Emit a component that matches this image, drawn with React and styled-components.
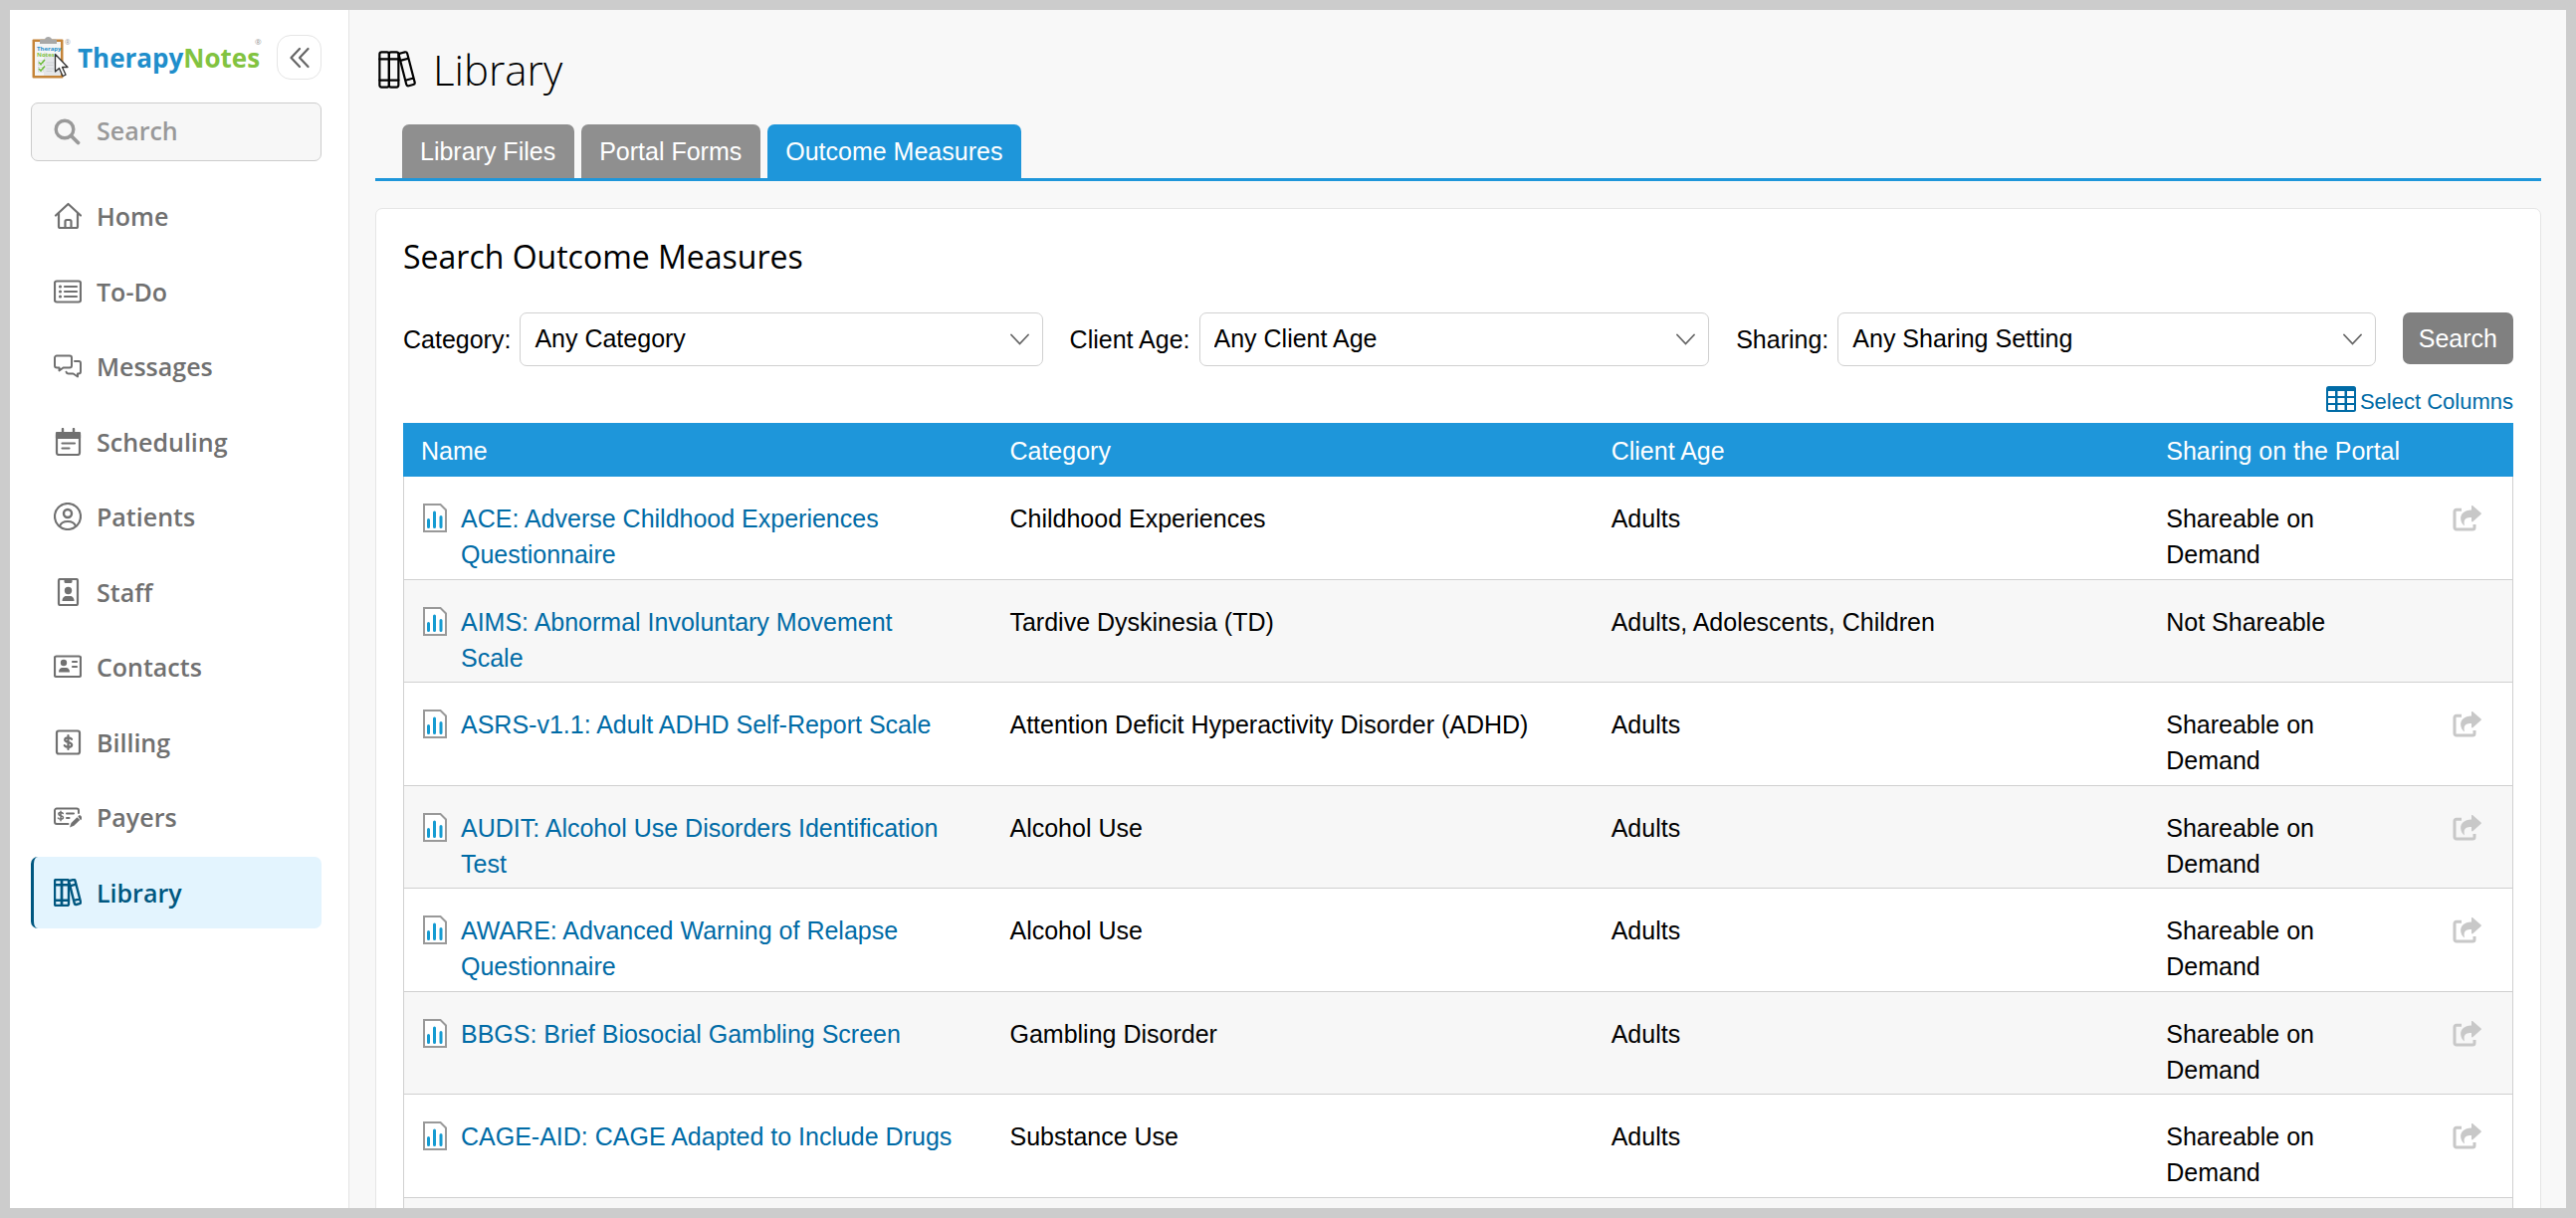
import React, { useState } from "react";
import styled, { createGlobalStyle } from "styled-components";

const GlobalStyle = createGlobalStyle`
  * {
    box-sizing: border-box;
  }

  body {
    margin: 0;
    background-color: #cccccc;
    color: #000;
    font-family: "Liberation Sans", Arial, sans-serif;
    font-size: 25px;
  }
`;

const Shell = styled.div`
  display: flex;
  height: 100vh;
  border: 10px solid #cccccc;
  background-color: #f8f8f8;
  overflow: hidden;
`;

/* Sidebar */

const Sidebar = styled.aside`
  flex: none;
  width: 341px;
  padding: 25px 27px 0 21px;
  border-right: 1px solid #e3e3e3;
  background-color: #fff;
  font-family: "Open Sans", "Noto Sans", sans-serif;
`;

const SidebarHeader = styled.div`
  display: flex;
  align-items: center;
  justify-content: space-between;
  height: 45px;
`;

const Brand = styled.a`
  display: flex;
  align-items: center;
  gap: 7px;
  text-decoration: none;
`;

const BrandName = styled.span`
  color: #1f8ecb;
  font-size: 26px;
  font-weight: 700;
  line-height: 40px;
`;

const BrandAccent = styled.span`
  color: #82c341;
`;

const RegisteredMark = styled.sup`
  align-self: flex-start;
  margin-left: -12px;
  color: #999;
  font-size: 8px;
  line-height: 12px;
`;

const CollapseButton = styled.button`
  display: flex;
  align-items: center;
  justify-content: center;
  width: 45px;
  height: 45px;
  padding: 0;
  border: 1px solid #e5e5e5;
  border-radius: 14px;
  background-color: #fff;
  color: #666;
  cursor: pointer;
`;

const SearchBox = styled.label`
  display: flex;
  align-items: center;
  gap: 15px;
  height: 59px;
  margin: 23px 0 19px;
  padding-left: 22px;
  border: 1px solid #ccc;
  border-radius: 7px;
  background-color: #f7f7f7;
  color: #999;
`;

const SearchInput = styled.input`
  flex: 1;
  min-width: 0;
  padding: 0 0 3px;
  border: none;
  outline: none;
  background: none;
  color: #707070;
  font-family: inherit;
  font-size: 25px;
  font-weight: 600;

  &::placeholder {
    color: #999;
    opacity: 1;
  }
`;

const NavList = styled.ul`
  margin: 0;
  padding: 0;
  list-style: none;
`;

const NavItem = styled.li`
  margin-bottom: 4px;

  &:nth-child(even) {
    margin-bottom: 3px;
  }
`;

const NavLink = styled.a`
  display: flex;
  align-items: center;
  gap: 15px;
  height: 72px;
  padding-left: 20px;
  border-left: 3px solid ${(props) => (props.$active ? "#005780" : "transparent")};
  border-radius: 7px;
  background-color: ${(props) => (props.$active ? "#e3f4fe" : "transparent")};
  color: ${(props) => (props.$active ? "#005780" : "#707070")};
  font-size: 25px;
  font-weight: 600;
  text-decoration: none;
`;

/* Main area */

const Main = styled.main`
  display: flex;
  flex: 1;
  flex-direction: column;
  min-width: 0;
  padding: 30px 25px 0 26px;
`;

const PageTitle = styled.h1`
  display: flex;
  align-items: center;
  gap: 17px;
  margin: 0 0 25px;
  padding-left: 3px;
  font-family: "Open Sans", "Noto Sans", sans-serif;
  font-size: 42px;
  font-weight: 300;
  line-height: 60px;
`;

const Tabs = styled.nav`
  display: flex;
  gap: 7px;
  padding-left: 27px;
  border-bottom: 3px solid #1e96da;
`;

const Tab = styled.a`
  padding: 0 19px 0 18px;
  border-radius: 7px 7px 0 0;
  background-color: ${(props) => (props.$active ? "#1e96da" : "#8f8f8f")};
  color: #fff;
  line-height: 54px;
  text-decoration: none;
`;

const Card = styled.section`
  flex: 1 0 auto;
  margin-top: 27px;
  padding: 26px 27px;
  border: 1px solid #e5e5e5;
  border-radius: 7px;
  background-color: #fff;
`;

const CardTitle = styled.h2`
  margin: 0 0 34px;
  font-family: "Open Sans", "Noto Sans", sans-serif;
  font-size: 32px;
  font-weight: 400;
  line-height: 44px;
`;

const Filters = styled.form`
  display: flex;
  gap: 27px;
`;

const Filter = styled.div`
  display: flex;
  flex: 1;
  align-items: center;
  gap: 9px;
`;

const SelectWrap = styled.div`
  display: grid;
  flex: 1;
  align-items: center;

  > * {
    grid-area: 1 / 1;
  }

  svg {
    justify-self: end;
    margin-right: 14px;
    pointer-events: none;
  }
`;

const Select = styled.select`
  width: 100%;
  height: 54px;
  padding: 0 40px 2px 14px;
  border: 1px solid #d0d0d0;
  border-radius: 7px;
  appearance: none;
  background-color: #fff;
  color: #000;
  font-family: inherit;
  font-size: 25px;
`;

const SearchButton = styled.button`
  height: 52px;
  padding: 0 16px;
  border: none;
  border-radius: 7px;
  background-color: #808080;
  color: #fff;
  font-family: inherit;
  font-size: 25px;
  cursor: pointer;
`;

const TableTools = styled.div`
  display: flex;
  justify-content: flex-end;
  margin: 20px 0 11px;
`;

const SelectColumns = styled.button`
  display: flex;
  align-items: flex-end;
  gap: 4px;
  padding: 0;
  border: none;
  background: none;
  color: #006ba6;
  font-family: inherit;
  font-size: 22px;
  line-height: 20px;
  cursor: pointer;
`;

const Table = styled.table`
  width: 100%;
  border-collapse: separate;
  border-spacing: 0;
  table-layout: fixed;
`;

const Col = styled.col`
  width: ${(props) => props.$width};
`;

const HeadCell = styled.th`
  height: 54px;
  padding: 2px 18px 0;
  background-color: #1e96da;
  color: #fff;
  font-weight: 400;
  text-align: left;
`;

const Row = styled.tr`
  height: 104px;

  &:nth-child(even) {
    height: 103px;
    background-color: #f7f7f7;
  }
`;

const Cell = styled.td`
  padding: 24px 18px 6px;
  border-bottom: 1px solid #d0d0d0;
  line-height: 36px;
  vertical-align: top;

  &:first-child {
    padding-left: 19px;
    padding-right: 35px;
    border-left: 1px solid #d0d0d0;
  }

  &:last-child {
    padding-right: 31px;
    border-right: 1px solid #d0d0d0;
    text-align: right;
  }
`;

const MeasureLink = styled.a`
  display: flex;
  align-items: flex-start;
  gap: 14px;
  color: #006ba6;
  text-decoration: none;

  svg {
    flex: none;
    margin-top: 3px;
  }
`;

const ShareButton = styled.button`
  padding: 5px 0 0;
  border: none;
  background: none;
  color: #c8c8c8;
  cursor: pointer;

  svg {
    display: block;
  }
`;

/* Icons */

const Icon = ({ size = 28, stroke = 2.2, children }) => (
  <svg
    width={size}
    height={size}
    viewBox="0 0 28 28"
    fill="none"
    stroke="currentColor"
    strokeWidth={stroke}
    strokeLinecap="round"
    strokeLinejoin="round"
    aria-hidden="true"
  >
    {children}
  </svg>
);

const HomeIcon = () => (
  <Icon>
    <path d="M2 13.5 14.5 2 27 13.5M5 11v13.5a1.5 1.5 0 0 0 1.5 1.5h16a1.5 1.5 0 0 0 1.5-1.5V11" />
    <path d="M11.500 26v-6.500a1.500 1.500 0 0 1 1.500-1.500h3a1.500 1.500 0 0 1 1.500 1.500V26" />
  </Icon>
);

const TodoIcon = () => (
  <Icon>
    <rect x="1" y="3.500" width="26" height="21" rx="2" />
    <path d="M11 9h12M11 14h12M11 19h12" strokeWidth="2.200" />
    <g fill="currentColor" stroke="none">
      <circle cx="6.500" cy="9" r="1.600" />
      <circle cx="6.500" cy="14" r="1.600" />
      <circle cx="6.500" cy="19" r="1.600" />
    </g>
  </Icon>
);

const MessagesIcon = () => (
  <Icon stroke={2}>
    <path d="M3 3.500h13a2 2 0 0 1 2 2v8a2 2 0 0 1-2 2H9.500L5.500 18.500v-3H3a2 2 0 0 1-2-2v-8a2 2 0 0 1 2-2z" />
    <path d="M21 9h4a2 2 0 0 1 2 2v8.500a2 2 0 0 1-2 2h-1v3l-4.500-3H15a2.500 2.500 0 0 1-2.500-1.800" />
  </Icon>
);

const SchedulingIcon = () => (
  <Icon>
    <rect x="3" y="5" width="23" height="22" rx="2" />
    <path d="M3 5h23v5H3z" fill="currentColor" />
    <path d="M9 1v4M20 1v4" strokeWidth="2.400" />
    <path d="M8.500 15.500H21M8.500 20.500h7" strokeWidth="2.200" />
  </Icon>
);

const PatientsIcon = () => (
  <Icon>
    <circle cx="14" cy="14" r="13" />
    <circle cx="14" cy="11" r="4" strokeWidth="2.400" />
    <path d="M6 24c1-3.500 4-5 8-5s7 1.500 8 5" />
  </Icon>
);

const StaffIcon = () => (
  <Icon>
    <rect x="5" y="1" width="19" height="26" rx="1.500" />
    <g fill="currentColor" stroke="none">
      <path d="M10.500 1h8v2.500a1.500 1.500 0 0 1-1.500 1.500h-5a1.500 1.500 0 0 1-1.500-1.500z" />
      <circle cx="14.500" cy="12.500" r="3.700" />
      <path d="M8.500 23c0-3.500 2-5 4-5h4c2 0 4 1.500 4 5z" />
    </g>
  </Icon>
);

const ContactsIcon = () => (
  <Icon>
    <rect x="1" y="3.500" width="26" height="20.500" rx="1.500" />
    <g fill="currentColor" stroke="none">
      <circle cx="10" cy="10" r="3.200" />
      <path d="M5 19.500c0-3 1.500-4.500 3.500-4.500h4c2 0 3.500 1.500 3.500 4.500z" />
    </g>
    <path d="M19 9h4M19 14h4" />
  </Icon>
);

const BillingIcon = () => (
  <Icon>
    <rect x="3" y="2.500" width="23" height="23" rx="2" />
    <path d="M14.500 7v14M18 10.800c-1-1.200-2.200-1.400-3.500-1.400-2 0-3.300.8-3.300 2.200 0 3.200 7 1.600 7 4.900 0 1.500-1.500 2.300-3.600 2.300-1.500 0-2.800-.4-3.800-1.600" />
  </Icon>
);

const PayersIcon = () => (
  <Icon stroke={2}>
    <path d="M14.500 21H3a2 2 0 0 1-2-2V7.500a2 2 0 0 1 2-2h20a2 2 0 0 1 2 2V10" />
    <path
      d="M7 8.200v9.600M9.300 10.500c-.6-.8-1.400-1-2.300-1-1.400 0-2.200.6-2.200 1.500 0 2.200 4.700 1.200 4.700 3.600 0 1.100-1 1.700-2.500 1.700-1 0-1.900-.3-2.600-1.200"
      strokeWidth="1.500"
    />
    <path d="M13 10.500h7M13 15h2.500" />
    <g fill="currentColor" stroke="none">
      <path d="M16 24.500l1.500-4.500 6-5.800 2.800 2.800-6 5.800z" />
      <path d="M24.300 13.400l1-1a1 1 0 0 1 1.400 0l1.300 1.300v2.500l-1 1z" />
    </g>
  </Icon>
);

const LibraryIcon = ({ size, stroke = 2.4 }) => (
  <Icon size={size} stroke={stroke}>
    <rect x="1" y="1" width="7" height="26" rx="1.500" />
    <rect x="8" y="1" width="7" height="26" rx="1.500" />
    <path d="M1 6.200h14M1 21.800h14" />
    <path d="M16.600 1.800l3.100-.8a1.500 1.500 0 0 1 1.800 1.100l5.500 21.200a1.500 1.500 0 0 1-1.100 1.800l-3.300.9a1.500 1.500 0 0 1-1.800-1.100L15.400 3.600a1.500 1.500 0 0 1 1.200-1.800zM16.300 7.300l6-1.600M20.100 21.900l6-1.600" />
  </Icon>
);

const SearchIcon = () => (
  <Icon stroke={3.4}>
    <circle cx="11" cy="11" r="8.800" />
    <path d="M17.500 17.500l7 7" strokeWidth="3.800" />
  </Icon>
);

const CollapseIcon = () => (
  <svg
    width="20"
    height="22"
    viewBox="0 0 20 22"
    fill="none"
    stroke="currentColor"
    strokeWidth="2.200"
    strokeLinecap="round"
    strokeLinejoin="round"
    aria-hidden="true"
  >
    <path d="M10 2l-8.500 9 8.500 9M18.500 2L10 11l8.500 9" />
  </svg>
);

const ChevronIcon = () => (
  <svg
    width="19"
    height="12"
    viewBox="0 0 19 12"
    fill="none"
    stroke="#666"
    strokeWidth="1.800"
    strokeLinecap="round"
    aria-hidden="true"
  >
    <path d="M1 1.500l8.500 9 8.500-9" />
  </svg>
);

const ColumnsIcon = () => (
  <svg width="30" height="26" viewBox="0 0 30 26" aria-hidden="true">
    <rect width="30" height="26" rx="2.500" fill="#006ba6" />
    <g fill="#fff">
      {[5, 12, 19].map((y) =>
        [2, 11.5, 21].map((x) => (
          <rect key={`${x}-${y}`} x={x} y={y} width="7" height="5" />
        ))
      )}
    </g>
  </svg>
);

const MeasureIcon = () => (
  <svg width="24" height="29" viewBox="0 0 24 29" fill="none" aria-hidden="true">
    <path d="M1 1h16.500L23 6.500V28H1z" fill="#fff" stroke="#999" strokeWidth="2" />
    <path
      d="M5.500 16.500v7M11.500 9v14.500M18 13.500v10"
      stroke="#159bd2"
      strokeWidth="3"
      strokeLinecap="round"
    />
  </svg>
);

const ShareIcon = () => (
  <svg width="29" height="26" viewBox="0 0 29 26" fill="none" aria-hidden="true">
    <path
      d="M9 4.200H3.700A1.700 1.700 0 0 0 2 5.900v16.400A1.700 1.700 0 0 0 3.700 24h16.600a1.700 1.700 0 0 0 1.700-1.700V19"
      stroke="currentColor"
      strokeWidth="3"
    />
    <path
      d="M19 .5a.8.8 0 0 1 1.300-.3l8.300 7.400a.8.800 0 0 1 0 1.200l-8.300 7.400A.8.8 0 0 1 19 15.600V12c-5.500 0-8.500 1.500-7 8.500-6-4.500-6-15.500 7-16z"
      fill="currentColor"
    />
  </svg>
);

const ClipboardLogo = () => (
  <svg width="40" height="44" viewBox="0 0 40 44" aria-hidden="true">
    <rect x="1.500" y="3.500" width="31" height="39" rx="1" fill="#c58438" />
    <rect x="4" y="6" width="26" height="34" fill="#f4f5f6" />
    <path d="M13 16l17 8v16H13z" fill="#e4e6e9" />
    <path d="M9 4.500q0-1 1-1h4q.5-2.500 3.500-2.500t3.500 2.500h4q1 0 1 1V8H9z" fill="#a8a8a8" />
    <g fontFamily="Open Sans, sans-serif" fontWeight="700" fontSize="6">
      <text x="6" y="15" fill="#1f8ecb">Therapy</text>
      <text x="6" y="21" fill="#82c341">Notes</text>
    </g>
    <g fill="#fff" stroke="#c3c8cc" strokeWidth=".6">
      <rect x="7.500" y="25" width="5" height="4.500" />
      <rect x="7.500" y="31.500" width="5" height="4.500" />
    </g>
    <path d="M8 26.500l2 2 4-4.500M8 33l2 2 4-4.500" fill="none" stroke="#6cbb3c" strokeWidth="1.600" />
    <path d="M15.500 27h8M15.500 29.500h7M15.500 33h8M15.500 35.500h6" stroke="#cfd3d6" />
    <path
      d="M24.500 18.500v17.500l4-3.500 3.500 8 3-1.400-3.500-7.600h5.500z"
      fill="#fff"
      stroke="#333"
      strokeWidth="1.300"
      strokeLinejoin="round"
    />
    <text x="34" y="8.500" fill="#999" fontFamily="Open Sans, sans-serif" fontSize="7">®</text>
  </svg>
);

const navItems = [
  { label: "Home", icon: HomeIcon },
  { label: "To-Do", icon: TodoIcon },
  { label: "Messages", icon: MessagesIcon },
  { label: "Scheduling", icon: SchedulingIcon },
  { label: "Patients", icon: PatientsIcon },
  { label: "Staff", icon: StaffIcon },
  { label: "Contacts", icon: ContactsIcon },
  { label: "Billing", icon: BillingIcon },
  { label: "Payers", icon: PayersIcon },
  { label: "Library", icon: LibraryIcon },
];

const tabs = ["Library Files", "Portal Forms", "Outcome Measures"];

const filters = [
  { id: "category", label: "Category:", value: "Any Category" },
  { id: "age", label: "Client Age:", value: "Any Client Age" },
  { id: "sharing", label: "Sharing:", value: "Any Sharing Setting" },
];

const measures = [
  {
    name: "ACE: Adverse Childhood Experiences Questionnaire",
    category: "Childhood Experiences",
    age: "Adults",
    shareable: true,
  },
  {
    name: "AIMS: Abnormal Involuntary Movement Scale",
    category: "Tardive Dyskinesia (TD)",
    age: "Adults, Adolescents, Children",
    shareable: false,
  },
  {
    name: "ASRS-v1.1: Adult ADHD Self-Report Scale",
    category: "Attention Deficit Hyperactivity Disorder (ADHD)",
    age: "Adults",
    shareable: true,
  },
  {
    name: "AUDIT: Alcohol Use Disorders Identification Test",
    category: "Alcohol Use",
    age: "Adults",
    shareable: true,
  },
  {
    name: "AWARE: Advanced Warning of Relapse Questionnaire",
    category: "Alcohol Use",
    age: "Adults",
    shareable: true,
  },
  {
    name: "BBGS: Brief Biosocial Gambling Screen",
    category: "Gambling Disorder",
    age: "Adults",
    shareable: true,
  },
  {
    name: "CAGE-AID: CAGE Adapted to Include Drugs",
    category: "Substance Use",
    age: "Adults",
    shareable: true,
  },
];

const App = () => {
  const [activeNav, setActiveNav] = useState("Library");
  const [activeTab, setActiveTab] = useState("Outcome Measures");

  return (
    <>
      <GlobalStyle />
      <Shell>
        <Sidebar>
          <SidebarHeader>
            <Brand href="#">
              <ClipboardLogo />
              <BrandName>
                Therapy<BrandAccent>Notes</BrandAccent>
              </BrandName>
              <RegisteredMark>®</RegisteredMark>
            </Brand>
            <CollapseButton type="button" aria-label="Collapse menu">
              <CollapseIcon />
            </CollapseButton>
          </SidebarHeader>
          <SearchBox>
            <SearchIcon />
            <SearchInput type="text" placeholder="Search" aria-label="Search" />
          </SearchBox>
          <nav>
            <NavList>
              {navItems.map(({ label, icon: ItemIcon }) => (
                <NavItem key={label}>
                  <NavLink
                    href="#"
                    $active={label === activeNav}
                    onClick={() => setActiveNav(label)}
                  >
                    <ItemIcon />
                    {label}
                  </NavLink>
                </NavItem>
              ))}
            </NavList>
          </nav>
        </Sidebar>

        <Main>
          <PageTitle>
            <LibraryIcon size={38} stroke={1.6} />
            Library
          </PageTitle>
          <Tabs>
            {tabs.map((tab) => (
              <Tab
                key={tab}
                href="#"
                $active={tab === activeTab}
                onClick={() => setActiveTab(tab)}
              >
                {tab}
              </Tab>
            ))}
          </Tabs>

          <Card>
            <CardTitle>Search Outcome Measures</CardTitle>
            <Filters onSubmit={(e) => e.preventDefault()}>
              {filters.map(({ id, label, value }) => (
                <Filter key={id}>
                  <label htmlFor={id}>{label}</label>
                  <SelectWrap>
                    <Select id={id}>
                      <option>{value}</option>
                    </Select>
                    <ChevronIcon />
                  </SelectWrap>
                </Filter>
              ))}
              <SearchButton type="submit">Search</SearchButton>
            </Filters>

            <TableTools>
              <SelectColumns type="button">
                <ColumnsIcon />
                Select Columns
              </SelectColumns>
            </TableTools>

            <Table>
              <colgroup>
                <Col $width="27.9%" />
                <Col $width="28.5%" />
                <Col $width="26.3%" />
                <Col $width="11.5%" />
                <Col />
              </colgroup>
              <thead>
                <tr>
                  <HeadCell>Name</HeadCell>
                  <HeadCell>Category</HeadCell>
                  <HeadCell>Client Age</HeadCell>
                  <HeadCell colSpan={2}>Sharing on the Portal</HeadCell>
                </tr>
              </thead>
              <tbody>
                {measures.map(({ name, category, age, shareable }) => (
                  <Row key={name}>
                    <Cell>
                      <MeasureLink href="#">
                        <MeasureIcon />
                        <span>{name}</span>
                      </MeasureLink>
                    </Cell>
                    <Cell>{category}</Cell>
                    <Cell>{age}</Cell>
                    <Cell>{shareable ? "Shareable on Demand" : "Not Shareable"}</Cell>
                    <Cell>
                      {shareable && (
                        <ShareButton type="button" aria-label="Share">
                          <ShareIcon />
                        </ShareButton>
                      )}
                    </Cell>
                  </Row>
                ))}
                <Row>
                  <Cell colSpan={5} />
                </Row>
              </tbody>
            </Table>
          </Card>
        </Main>
      </Shell>
    </>
  );
};

export default App;
